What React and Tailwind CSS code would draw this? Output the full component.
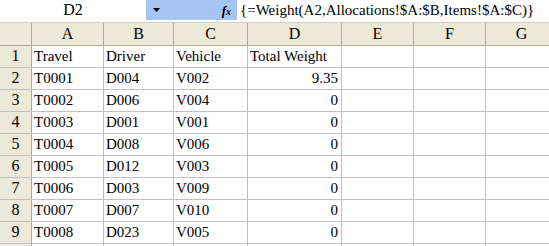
import React from "react";

const cols = [
  { name: "A", w: "w-[72px]" },
  { name: "B", w: "w-[70px]" },
  { name: "C", w: "w-[74px]" },
  { name: "D", w: "w-[94px]" },
  { name: "E", w: "w-[72px]" },
  { name: "F", w: "w-[72px]" },
  { name: "G", w: "w-[72px]" },
];

const rows = [
  ["Travel", "Driver", "Vehicle", "Total Weight"],
  ["T0001", "D004", "V002", "9.35"],
  ["T0002", "D006", "V004", "0"],
  ["T0003", "D001", "V001", "0"],
  ["T0004", "D008", "V006", "0"],
  ["T0005", "D012", "V003", "0"],
  ["T0006", "D003", "V009", "0"],
  ["T0007", "D007", "V010", "0"],
  ["T0008", "D023", "V005", "0"],
  ["", "", "", ""],
];

export default function App() {
  return (
    <div
      className="w-[549px] h-[246px] overflow-hidden bg-white text-black text-[15px] leading-none"
      style={{ fontFamily: '"Liberation Serif", serif' }}
    >
      {/* formula bar */}
      <div className="flex h-[20px]">
        <div className="w-[146px] shrink-0 bg-white flex items-center justify-center text-[16px]">D2</div>
        <div className="w-[91px] shrink-0 bg-[#a6c4f2] flex items-center">
          <div className="w-[20px] flex justify-center items-center">
            <svg width="7" height="4" viewBox="0 0 7 4">
              <path d="M0 0H7L3.5 4Z" fill="#000" />
            </svg>
          </div>
          <div className="flex-1 flex justify-end pr-[6px] italic font-bold text-[13px]">
            f<span className="text-[10px] self-end">x</span>
          </div>
        </div>
        <div className="flex-1 bg-white flex items-center pl-[3px] whitespace-nowrap">
          {"{=Weight(A2,Allocations!$A:$B,Items!$A:$C)}"}
        </div>
      </div>
      <div className="h-[2px] bg-white" />
      {/* column header */}
      <div className="flex h-[24px] bg-[#ece9d8] border-b border-[#aca899] border-t border-t-[#d4d0c8]">
        <div className="w-[32px] shrink-0 border-r border-[#aca899]" />
        {cols.map((c) => (
          <div
            key={c.name}
            className={`${c.w} shrink-0 border-r border-[#aca899] flex items-center justify-center text-[16px]`}
          >
            {c.name}
          </div>
        ))}
      </div>
      {/* rows */}
      {rows.map((r, i) => (
        <div key={i} className="flex h-[22px] border-b border-[#c0c0c0]">
          <div className="w-[32px] shrink-0 bg-[#ece9d8] border-r border-[#aca899] flex items-end pb-[3px] justify-center text-[16px]">
            {i < 9 ? i + 1 : ""}
          </div>
          {cols.map((c, j) => {
            const v = r[j] || "";
            const num = j === 3 && i > 0;
            return (
              <div
                key={c.name}
                className={`${c.w} shrink-0 border-r border-[#c0c0c0] flex items-end pb-[3px] whitespace-nowrap ${
                  num ? "justify-end pr-[3px]" : "pl-[2px]"
                }`}
              >
                {v}
              </div>
            );
          })}
        </div>
      ))}
    </div>
  );
}
